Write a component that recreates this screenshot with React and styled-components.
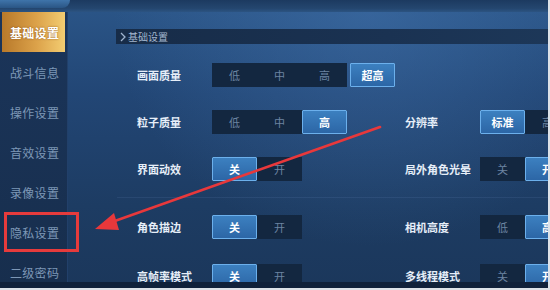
import styled, { createGlobalStyle } from 'styled-components';

const GlobalStyle = createGlobalStyle`
  html, body {
    margin: 0;
    padding: 0;
    background: #dde2e8;
  }
  body {
    font-family: "Noto Sans CJK SC", "Noto Sans", sans-serif;
  }
`;

const menu = ['基础设置', '战斗信息', '操作设置', '音效设置', '录像设置', '隐私设置', '二级密码'];

const rows = [
    {
        left: { label: '画面质量', options: ['低', '中', '高'], selected: 3, extra: '超高' },
        right: null,
    },
    {
        left: { label: '粒子质量', options: ['低', '中', '高'], selected: 2 },
        right: { label: '分辨率', options: ['标准', '高'], selected: 0 },
    },
    {
        left: { label: '界面动效', options: ['关', '开'], selected: 0 },
        right: { label: '局外角色光晕', options: ['关', '开'], selected: 1 },
    },
    {
        gap: 11,
        divider: true,
        left: { label: '角色描边', options: ['关', '开'], selected: 0 },
        right: { label: '相机高度', options: ['低', '高'], selected: 1 },
    },
    {
        gap: 2,
        left: { label: '高帧率模式', options: ['关', '开'], selected: 0 },
        right: { label: '多线程模式', options: ['关', '开'], selected: 1 },
    },
];

function Setting({ label, options, selected, extra }) {
    return (
        <SettingCell>
            <Label>{label}</Label>
            <Controls>
                <Segmented>
                    {options.map((o, i) => (
                        <Segment key={o} $active={i === selected}>{o}</Segment>
                    ))}
                </Segmented>
                {extra ? <Segment $active={selected === options.length} $alone>{extra}</Segment> : null}
            </Controls>
        </SettingCell>
    );
}

export default function App() {
    return (
        <>
            <GlobalStyle />
            <Screen>
                <TopStrip>
                    <TopTab />
                </TopStrip>
                <Body>
                    <Sidebar>
                        {menu.map((m, i) => (
                            <MenuItem key={m} $active={i === 0}>{m}</MenuItem>
                        ))}
                    </Sidebar>
                    <Main>
                        <SectionHeader>
                            <svg width="6" height="10" viewBox="0 0 6 10">
                                <path d="M1 1 L5 5 L1 9" fill="none" stroke="#9fb4cf" strokeWidth="1.3" />
                            </svg>
                            <span>基础设置</span>
                        </SectionHeader>
                        <Rows>
                            {rows.map((r, i) => (
                                <Row key={i} $gap={r.gap || 0} $divider={r.divider}>
                                    <Setting {...r.left} />
                                    {r.right ? <Setting {...r.right} /> : <span />}
                                </Row>
                            ))}
                        </Rows>
                    </Main>
                </Body>
                <BottomStrip />
                <Highlight />
                <Arrow width="548" height="288" viewBox="0 0 548 288">
                    <line x1="380" y1="127" x2="112" y2="222" stroke="#e8383b" strokeWidth="2.6" strokeLinecap="round" />
                    <polygon points="95,229 114,213 119,230" fill="#e8383b" />
                </Arrow>
            </Screen>
        </>
    );
}

const Screen = styled.div`
    position: relative;
    width: 548px;
    height: 288px;
    overflow: hidden;
    display: flex;
    flex-direction: column;
    background: #1a3456;
`;

const TopStrip = styled.div`
    height: 12px;
    flex-shrink: 0;
    background: linear-gradient(180deg, #1c3a60 0%, #24466f 70%, #2c5482 100%);
    display: flex;
`;

const TopTab = styled.div`
    width: 70px;
    height: 8px;
    border-radius: 0 0 14px 0;
    background: linear-gradient(180deg, #3f74aa, #2a5584);
`;

const Body = styled.div`
    flex: 1;
    display: flex;
    min-height: 0;
`;

const Sidebar = styled.div`
    width: 68px;
    flex-shrink: 0;
    display: flex;
    flex-direction: column;
    background: linear-gradient(180deg, #1b355a 0%, #172e4d 100%);
    border-right: 1px solid #22406a;
    box-sizing: border-box;
`;

const MenuItem = styled.div`
    height: 40px;
    flex-shrink: 0;
    display: flex;
    align-items: center;
    padding-left: 8px;
    margin: 0 2px;
    box-sizing: border-box;
    font-size: 12px;
    letter-spacing: 0.3px;
    color: ${p => (p.$active ? '#ffffff' : '#7d97b6')};
    font-weight: ${p => (p.$active ? 700 : 400)};
    text-shadow: ${p => (p.$active ? '0 0 2px rgba(120,60,0,0.8)' : 'none')};
    background: ${p => (p.$active
        ? 'linear-gradient(90deg, #b8792a 0%, #dca24a 55%, #f3cd72 100%)'
        : 'transparent')};
`;

const Main = styled.div`
    flex: 1;
    display: flex;
    flex-direction: column;
    padding-top: 17px;
    background:
        radial-gradient(ellipse at 60% 0%, rgba(70, 120, 180, 0.45) 0%, rgba(70, 120, 180, 0) 60%),
        linear-gradient(180deg, #2a5486 0%, #224675 30%, #1d3c63 70%, #1b375b 100%);
`;

const SectionHeader = styled.div`
    margin-left: 48px;
    height: 16px;
    display: flex;
    align-items: center;
    gap: 2px;
    padding-left: 4px;
    background: linear-gradient(90deg, #172c48 0%, #1a3252 60%, #1d3859 100%);
    font-size: 10px;
    color: #a3b6ce;
`;

const Rows = styled.div`
    display: flex;
    flex-direction: column;
    gap: 23px;
    padding-left: 69px;
    padding-top: 19px;
`;

const Row = styled.div`
    display: grid;
    grid-template-columns: 268px 1fr;
    align-items: center;
    margin-top: ${p => p.$gap}px;
    position: relative;
    &::before {
        content: ${p => (p.$divider ? '""' : 'none')};
        position: absolute;
        left: -20px;
        right: 0;
        top: -18px;
        height: 1px;
        background: rgba(120, 160, 210, 0.12);
    }
`;

const SettingCell = styled.div`
    display: grid;
    grid-template-columns: 75px auto;
    align-items: center;
`;

const Label = styled.div`
    font-size: 11px;
    font-weight: 700;
    color: #e6eef8;
    white-space: nowrap;
`;

const Controls = styled.div`
    display: flex;
    align-items: center;
    gap: 3px;
`;

const Segmented = styled.div`
    display: flex;
    background: #132740;
`;

const Segment = styled.div`
    width: 45px;
    height: 24px;
    box-sizing: border-box;
    display: flex;
    align-items: center;
    justify-content: center;
    font-size: 11px;
    font-weight: ${p => (p.$active ? 700 : 400)};
    color: ${p => (p.$active ? '#ffffff' : '#6c84a2')};
    background: ${p => (p.$active
        ? 'linear-gradient(180deg, #3c80c0 0%, #2c66a6 100%)'
        : p.$alone ? '#132740' : 'transparent')};
    border: 1px solid ${p => (p.$active ? '#6cb0ec' : 'transparent')};
    border-radius: 1px;
`;

const BottomStrip = styled.div`
    position: absolute;
    left: 0;
    right: 0;
    bottom: 0;
    height: 6px;
    background: #10213a;
`;

const Highlight = styled.div`
    position: absolute;
    left: 4px;
    top: 212px;
    width: 75px;
    height: 40px;
    box-sizing: border-box;
    border: 3px solid #e63b3c;
`;

const Arrow = styled.svg`
    position: absolute;
    left: 0;
    top: 0;
    pointer-events: none;
`;
